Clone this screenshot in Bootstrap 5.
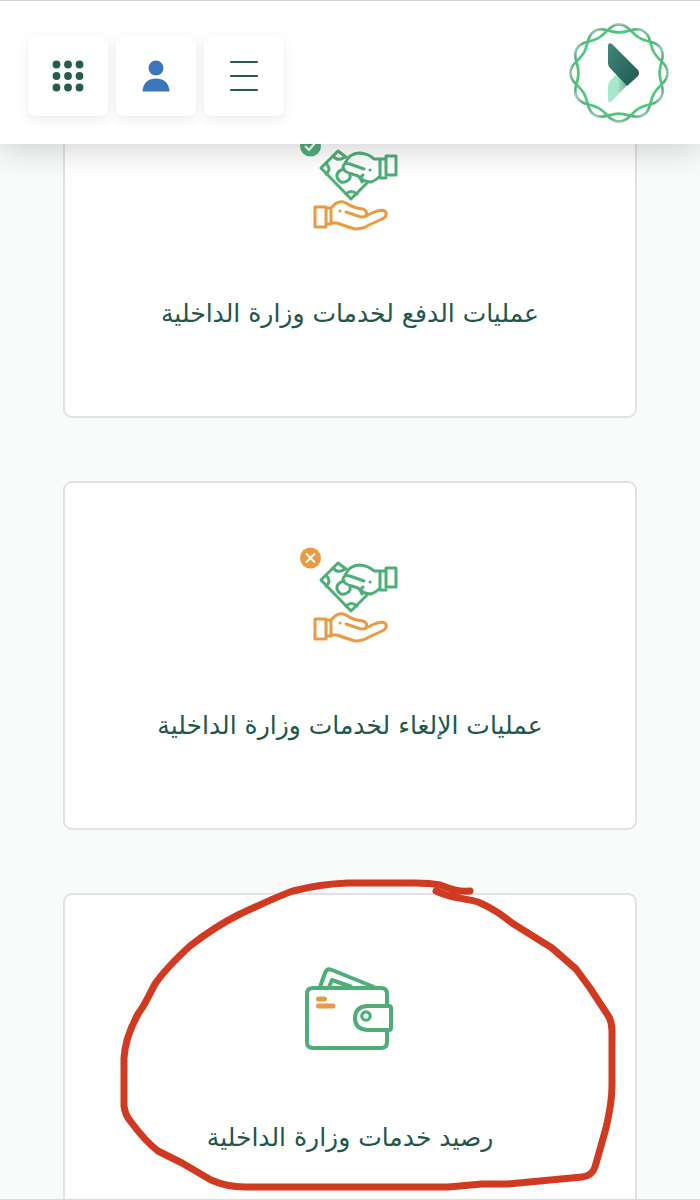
<!DOCTYPE html>
<html lang="ar" dir="rtl">
<head>
<meta charset="utf-8">
<meta name="viewport" content="width=device-width, initial-scale=1">
<title>خدمات وزارة الداخلية</title>
<link href="https://cdn.jsdelivr.net/npm/bootstrap@5.3.0/dist/css/bootstrap.min.css" rel="stylesheet">
<style>
  body { background: #f9fafa; font-family: "DejaVu Sans", sans-serif; color: #20574b; }
  .top-bar { height: 144px; padding: 0 28px; border-top: 1px solid #d4d4d6; box-shadow: 0 4px 32px rgba(0,0,0,.19); }
  .tool-btn { width: 80px; height: 80px; border-radius: 8px; box-shadow: 0 4px 12px rgba(0,0,0,.08); }
  .tools { padding-top: 6px; }
  .screen { border-bottom: 1px solid #d9dadc; }
  .services { padding: 69px 63px 0; gap: 63px; }
  .service-card { height: 349px; border: 2px solid #e1e1ea; border-radius: 9px; padding-top: 57px; gap: 52px; }
  .service-title { font-size: 25px; line-height: 48px; }
  .ink { top: -24px; left: 0; pointer-events: none; }
  .g { stroke: #4fae78; } .o { stroke: #ea9b42; }
</style>
</head>
<body>
<svg width="0" height="0" class="position-absolute" aria-hidden="true">
  <defs>
    <g id="hands" fill="none" stroke-width="3" stroke-linejoin="round" stroke-linecap="round">
      <g class="g">
        <path d="M56 29 L48 23 L31 40 L61 71 L77 55"/>
        <path d="M43 28Q48 34 55 29M36 35Q42 41 36 46M56 66Q61 61 67 66M72 54Q69 50 73 47"/>
        <path d="M54 41Q46 43 47 49Q50 57 57 53Q61 51 60 47"/>
        <path d="M74 41 L60 36Q53 34 53 40Q54 44 62 46L68 48Q73 54 81 54Q85 53 89 49M55 35L59 29Q64 25 70 25Q79 26 84 31H89"/>
        <path d="M96 31H90V50H96M96 28H106V47H96ZM80 42H80.1"/>
      </g>
      <g class="o">
        <path d="M25 79H36V99H25ZM36 80H41V96H36M41 80L45 76Q50 72 56 75Q63 80 73 81Q78 83 76 88L82 85Q90 81 95 83Q98 86 94 90L79 97Q73 101 65 101Q55 98 47 95H41"/>
        <path d="M56 84L68 88Q73 90 76 88M50 83H50.1"/>
      </g>
    </g>
    <radialGradient id="ring" gradientUnits="userSpaceOnUse" cx="0" cy="0" r="50">
      <stop offset=".87" stop-color="#4dc77a"/><stop offset=".93" stop-color="#5fac84"/><stop offset=".99" stop-color="#9bd6b6"/>
    </radialGradient>
    <linearGradient id="arrow" x1="0" y1="0" x2="1" y2="1"><stop offset="0" stop-color="#43877b"/><stop offset="1" stop-color="#1e5751"/></linearGradient>
    <linearGradient id="tail" x1="0" y1="0" x2="1" y2="0"><stop offset=".4" stop-color="#a7e8c8"/><stop offset="1" stop-color="#4b9880"/></linearGradient>
    <path id="lobe" d="M-20.300-35.100C-11.600-40.100-9-48.700 0-48.700S11.600-40.100 20.300-35.100" fill="none" stroke="url(#ring)" stroke-width="2.700"/>
  </defs>
</svg>

<div class="screen vh-100 overflow-hidden">
  <header class="top-bar fixed-top bg-white d-flex justify-content-between align-items-center">
    <a href="#" aria-label="الرئيسية" class="d-block">
      <svg width="106" height="106" viewBox="-53 -53 106 106" class="d-block">
        <use href="#lobe"/><use href="#lobe" transform="rotate(60)"/><use href="#lobe" transform="rotate(120)"/><use href="#lobe" transform="rotate(180)"/><use href="#lobe" transform="rotate(240)"/><use href="#lobe" transform="rotate(300)"/>
        <use href="#lobe" transform="rotate(30)"/><use href="#lobe" transform="rotate(90)"/><use href="#lobe" transform="rotate(150)"/><use href="#lobe" transform="rotate(210)"/><use href="#lobe" transform="rotate(270)"/><use href="#lobe" transform="rotate(330)"/>
        <path d="M-11 13Q-11 10-9 8L2-4L12 8L-7 28Q-11 31-11 26Z" fill="url(#tail)"/>
        <path d="M-11-27Q-11-31-7-29L19-3Q21 0 19 3L8 13L-9-5Q-11-7-11-10Z" fill="url(#arrow)"/>
      </svg>
    </a>
    <div class="tools d-flex gap-2">
      <button type="button" aria-label="القائمة" class="tool-btn btn bg-white border-0 p-0 d-flex align-items-center justify-content-center">
        <svg width="32" height="32" viewBox="0 0 32 32"><path d="M3 2H29M3 16H29M3 30H29" stroke="#265c4c" stroke-width="2.200" stroke-linecap="round"/></svg>
      </button>
      <button type="button" aria-label="الحساب" class="tool-btn btn bg-white border-0 p-0 d-flex align-items-center justify-content-center">
        <svg width="32" height="32" viewBox="0 0 32 32" fill="#3a76b9"><circle cx="16" cy="8" r="7.500"/><path d="M2.500 31.500C3 22 9 18.500 16 18.500S29 22 29.500 31.500Z"/></svg>
      </button>
      <button type="button" aria-label="التطبيقات" class="tool-btn btn bg-white border-0 p-0 d-flex align-items-center justify-content-center">
        <svg width="32" height="32" viewBox="0 0 32 32" fill="#265c4c"><circle cx="4.500" cy="4.500" r="3.900"/><circle cx="16" cy="4.500" r="3.900"/><circle cx="27.500" cy="4.500" r="3.900"/><circle cx="4.500" cy="16" r="3.900"/><circle cx="16" cy="16" r="3.900"/><circle cx="27.500" cy="16" r="3.900"/><circle cx="4.500" cy="27.500" r="3.900"/><circle cx="16" cy="27.500" r="3.900"/><circle cx="27.500" cy="27.500" r="3.900"/></svg>
      </button>
    </div>
  </header>

  <main class="services d-flex flex-column">
    <a href="#" class="service-card bg-white d-flex flex-column align-items-center text-decoration-none text-reset">
      <svg width="120" height="110" viewBox="0 0 120 110" class="flex-shrink-0"><circle cx="20.500" cy="18" r="10.500" fill="#4fae78"/><path d="M15 18L19 22L26 14" fill="none" stroke="#fff" stroke-width="2.200"/><use href="#hands"/></svg>
      <span class="service-title text-center">عمليات الدفع لخدمات وزارة الداخلية</span>
    </a>
    <a href="#" class="service-card bg-white d-flex flex-column align-items-center text-decoration-none text-reset">
      <svg width="120" height="110" viewBox="0 0 120 110" class="flex-shrink-0"><circle cx="20.500" cy="18" r="10.500" fill="#ea9b42"/><path d="M16 13.500L25 22.500M25 13.500L16 22.500" stroke="#fff" stroke-width="2"/><use href="#hands"/></svg>
      <span class="service-title text-center">عمليات الإلغاء لخدمات وزارة الداخلية</span>
    </a>
    <div class="position-relative">
      <a href="#" class="service-card bg-white d-flex flex-column align-items-center text-decoration-none text-reset">
        <svg width="120" height="110" viewBox="0 -2 120 110" class="flex-shrink-0" fill="none" stroke-width="4" stroke-linejoin="round">
          <g class="g"><path d="M97 51V40Q97 34 91 34H23Q17 34 17 40V88Q17 94 23 94H91Q97 94 97 88V77"/><path d="M30 33L35 19Q37 14 42 16L84 33M39 33L42 26L62 33"/><path d="M77 52H99Q101 52 101 54V74Q101 76 99 76H77Q65 75 65 64T77 52Z"/><circle cx="76" cy="62" r="4.200" stroke-width="3.200"/></g>
          <path class="o" stroke-width="5" stroke-linecap="round" d="M28.500 45H34.500M28.500 52H43"/>
        </svg>
        <span class="service-title text-center">رصيد خدمات وزارة الداخلية</span>
      </a>
      <svg class="ink position-absolute w-100" viewBox="63 869 574 331" fill="none" stroke="#d03a20" stroke-width="7" stroke-linecap="round" stroke-linejoin="round" aria-hidden="true">
        <path d="M470 891C457 892 448 888 440 885Q430 883 415 883H348Q320 884 293 891C278 896 260 905 240 914C220 924 204 935 190 946Q166 968 155 984C148 997 145 1005 138 1014Q125 1038 124 1058V1106Q125 1115 131 1122Q146 1142 158 1151L182 1163L211 1180Q227 1187 245 1187H448L482 1184H507L582 1177Q592 1176 595 1167L606 1128Q612 1102 612 1086V1031Q612 1023 609 1017L590 988L576 969L552 948L512 923Q495 909 478 902C465 898 450 898 436 891"/>
      </svg>
    </div>
  </main>
</div>
<script src="https://cdn.jsdelivr.net/npm/bootstrap@5.3.0/dist/js/bootstrap.bundle.min.js"></script>
</body>
</html>
